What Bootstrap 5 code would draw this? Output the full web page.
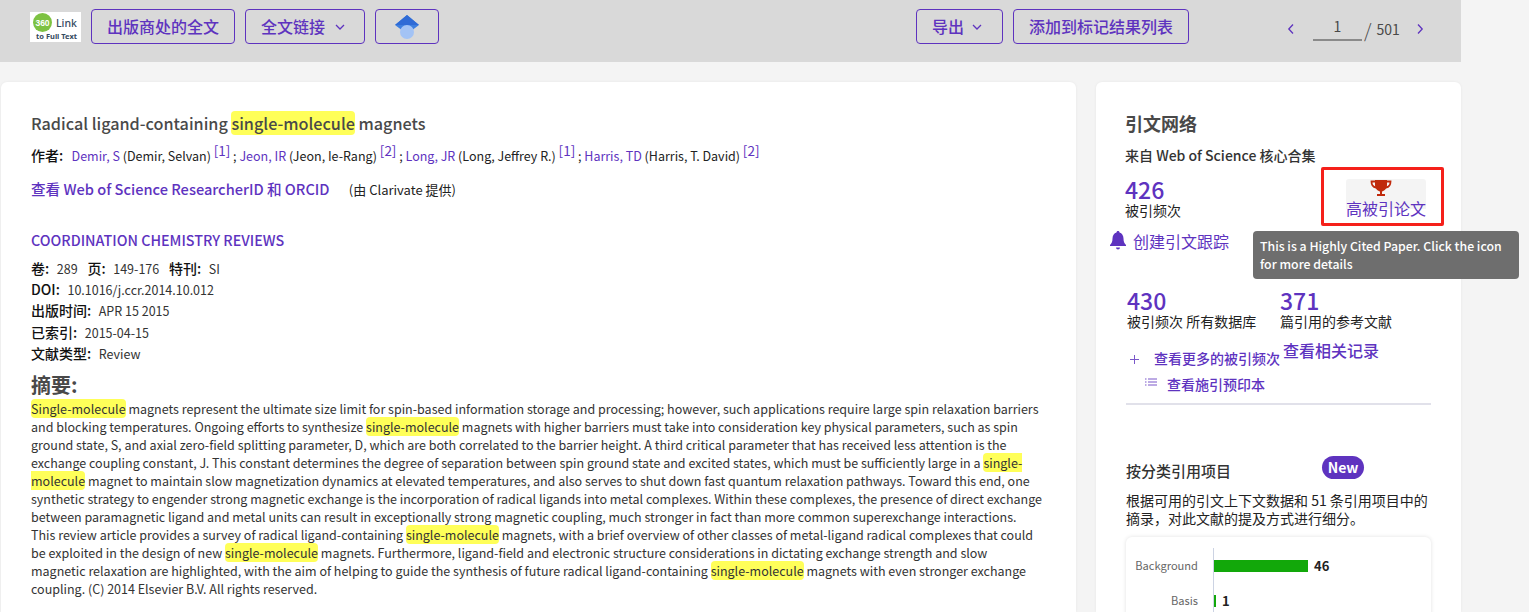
<!DOCTYPE html>
<html lang="zh">
<head>
<meta charset="utf-8">
<title>Radical ligand-containing single-molecule magnets</title>
<link href="https://cdn.jsdelivr.net/npm/bootstrap@5.3.0/dist/css/bootstrap.min.css" rel="stylesheet">
<style>
html,body{height:612px;overflow:hidden;background:#f4f4f4;}
body{font-family:"Noto Sans CJK SC","Noto Sans",sans-serif;font-size:13px;color:#212121;}
a{color:#5e33bf;text-decoration:none;}
.pg{width:1461px;position:relative;}
.tbar{height:62px;background:#d9d9d9;padding:9px 0 0 30px;}
.logo-box{width:51px;height:30px;background:#fff;margin-top:3px;margin-right:10px;flex:none;}
.tbtn{height:35px;border:1px solid #5e33bf;color:#5e33bf;border-radius:4px;font-size:16px;font-weight:500;padding:0 15px;line-height:33px;background:transparent;white-space:nowrap;display:flex;align-items:center;}
.tbtn:hover{color:#5e33bf;}
.pager{color:#494949;font-size:14px;margin-left:98px;}
.pinput{width:49px;height:24px;border-bottom:2px solid #8a8a8a;text-align:center;line-height:19px;margin:0 2px 0 18px;color:#494949;}
.pslash{font-size:19px;font-weight:300;margin-right:5px;line-height:1;}
.body-row{padding:20px 0 0 1px;gap:20px;}
.maincard{width:1075px;height:530px;background:#fff;border:0;border-radius:6px 6px 0 0;padding:29px 30px 0;box-shadow:0 0 3px rgba(0,0,0,.06);overflow:hidden;}
.sidecard{width:365px;height:530px;background:#fff;border:0;border-radius:6px 6px 0 0;padding:30px 29px 0;box-shadow:0 0 3px rgba(0,0,0,.06);overflow:hidden;}
.maincard>*,.sidecard>*{flex:none;}
.ttl{font-size:16.2px;font-weight:500;line-height:24px;color:#494949;margin:0;}
mark.hl{background:#ffff59;padding:0;border-radius:4px;color:inherit;}
.au{margin-top:8px;line-height:24px;font-size:12.5px;color:#222;}
.au sup{font-size:13.5px;top:-.35em;color:#5e33bf;}
.lbl{font-weight:500;color:#111;font-size:14px;}
.rid{font-size:14.6px;font-weight:500;margin-top:9px;line-height:24px;}
.rid small{font-size:13px;font-weight:400;color:#222;margin-left:16px;}
.jn{font-size:14.3px;font-weight:500;margin-top:26px;line-height:24px;}
.meta{font-size:12.5px;line-height:21.2px;color:#333;margin-top:6px;}
.meta .lbl{margin-right:2px;}
.meta .sp{margin-right:7px;}
.abh{font-size:20px;font-weight:700;line-height:24px;color:#494949;margin-top:9px;}
.abst{width:1012px;line-height:18px;font-size:12.5px;color:#333;margin:3px 0 0;}
.s-h{font-size:18px;font-weight:700;color:#494949;line-height:24px;margin-top:-1px;}
.s-sub{font-weight:500;line-height:20px;margin-top:10px;color:#333;font-size:14px;}
.num{font-size:23px;font-weight:500;color:#5e33bf;line-height:24px;}
.cnt{line-height:18px;color:#222;font-size:14px;}
.redbox{width:123px;height:59px;border:3px solid #f5201a;border-radius:2px;margin:-2px -12px 0 0;padding-top:4px;position:relative;}
.hcp{width:80px;margin-left:22px;text-align:center;background:linear-gradient(#f4f4f4 0 30px,transparent 30px);border-radius:3px;}
.hcp a{font-size:16px;line-height:22px;display:block;white-space:nowrap;}
.tipx{position:absolute;left:1253px;top:231px;width:266px;height:48px;background:#6e6e6e;color:#fff;border-radius:4px;font-weight:500;font-size:12.3px;line-height:18px;padding:6px 7px;z-index:3;}
.alert-l{font-size:16px;margin:3px 0 0 -15px;line-height:24px;}
.two{margin-top:35px;padding-left:2px;}
.two .col1{width:153px;}
.more{font-weight:500;font-size:14px;}
.rel{font-size:16px;font-weight:500;line-height:22px;margin:-7px 0 0 3px;}
.gline{height:2px;background:#e1e1ea;margin-top:9px;width:305px;margin-left:1px;}
.catp{margin:10px 0 0 1px;width:305px;line-height:18px;color:#222;font-size:14px;}
.newp{background:#5e33bf;color:#fff;border-radius:12px;width:42px;height:23px;font-size:14px;font-weight:700;line-height:22px;text-align:center;margin-left:91px;margin-top:-5px;}
.chartc{width:305px;margin:10px 0 0 1px;height:100px;background:#fff;border-radius:6px;box-shadow:0 0 4px rgba(0,0,0,.12);padding-top:11px;}
.crow{height:35px;}
.clab{width:72px;text-align:right;font-size:11.1px;color:#666;flex:none;padding-top:9px;}
.cbar{height:12px;background:#12a80a;}
.axis{border-left:1px solid #ccd3e3;margin-left:15px;height:35px;display:flex;align-items:center;}
.cv{font-weight:700;font-size:13px;margin-left:6px;color:#222;}
</style>
</head>
<body>
<div class="pg">
  <div class="tbar d-flex">
    <div class="logo-box">
      <svg width="51" height="30" viewBox="0 0 51 30"><circle cx="12.500" cy="10.500" r="9.500" fill="#7dc242"/><text x="12.500" y="13.500" font-size="8.500" font-weight="700" text-anchor="middle" fill="#fff" font-family="Liberation Sans">360</text><text x="26" y="15" font-size="10.500" font-weight="500" fill="#34495e" font-family="Noto Sans">Link</text><text x="6" y="27" font-size="7.500" font-weight="700" fill="#34495e" font-family="Noto Sans">to Full Text</text></svg>
    </div>
    <a class="tbtn" href="#" style="width:144px">出版商处的全文</a>
    <a class="tbtn" href="#" style="width:120px;margin-left:10px">全文链接<svg width="10" height="6" viewBox="0 0 10 6" style="margin-left:10px"><path d="M1 1l4 4 4-4" fill="none" stroke="#5e33bf" stroke-width="1.3"/></svg></a>
    <a class="tbtn justify-content-center" href="#" style="width:64px;margin-left:10px">
      <svg width="24" height="24" viewBox="0 0 24 24"><path d="M12 0l12 10-12 9L0 10z" fill="#3d7fe0"/><path d="M12 0l12 10H0z" fill="#2f6bd6"/><circle cx="12" cy="17" r="7" fill="#a3c3f5"/></svg>
    </a>
    <a class="tbtn" href="#" style="margin-left:477px;width:87px">导出<svg width="10" height="6" viewBox="0 0 10 6" style="margin-left:8px;flex:none"><path d="M1 1l4 4 4-4" fill="none" stroke="#5e33bf" stroke-width="1.3"/></svg></a>
    <a class="tbtn" href="#" style="margin-left:10px;width:176px">添加到标记结果列表</a>
    <div class="pager d-flex align-items-center" style="height:40px">
      <svg width="8" height="12" viewBox="0 0 8 12"><path d="M6 1.500L1.800 6 6 10.500" fill="none" stroke="#5e33bf" stroke-width="1.300"/></svg>
      <div class="pinput">1</div>
      <span class="pslash">/</span><span>501</span>
      <svg width="8" height="12" viewBox="0 0 8 12" style="margin-left:16px"><path d="M2 1.500L6.200 6 2 10.500" fill="none" stroke="#5e33bf" stroke-width="1.300"/></svg>
    </div>
  </div>

  <div class="body-row d-flex">
    <div class="card maincard">
      <h1 class="ttl">Radical ligand-containing <mark class="hl">single-molecule</mark> magnets</h1>
      <div class="au"><span class="lbl">作者:</span>&nbsp;&nbsp; <a href="#">Demir, S</a> (Demir, Selvan) <sup>[1]</sup> ; <a href="#">Jeon, IR</a> (Jeon, Ie-Rang) <sup>[2]</sup> ; <a href="#">Long, JR</a> (Long, Jeffrey R.) <sup>[1]</sup> ; <a href="#">Harris, TD</a> (Harris, T. David) <sup>[2]</sup></div>
      <div class="rid"><a href="#">查看 Web of Science ResearcherID 和 ORCID</a> <small>(由 Clarivate 提供)</small></div>
      <div class="jn"><a href="#">COORDINATION CHEMISTRY REVIEWS</a></div>
      <div class="meta">
        <div><span class="lbl">卷:</span>&nbsp; <span class="sp">289</span> <span class="lbl">页:</span>&nbsp; <span class="sp">149-176</span> <span class="lbl">特刊:</span>&nbsp; SI</div>
        <div><span class="lbl">DOI:</span>&nbsp; 10.1016/j.ccr.2014.10.012</div>
        <div><span class="lbl">出版时间:</span>&nbsp; APR 15 2015</div>
        <div><span class="lbl">已索引:</span>&nbsp; 2015-04-15</div>
        <div><span class="lbl">文献类型:</span>&nbsp; Review</div>
      </div>
      <div class="abh">摘要:</div>
      <p class="abst"><mark class="hl">Single-molecule</mark> magnets represent the ultimate size limit for spin-based information storage and processing; however, such applications require large spin relaxation barriers and blocking temperatures. Ongoing efforts to synthesize <mark class="hl">single-molecule</mark> magnets with higher barriers must take into consideration key physical parameters, such as spin ground state, S, and axial zero-field splitting parameter, D, which are both correlated to the barrier height. A third critical parameter that has received less attention is the exchange coupling constant, J. This constant determines the degree of separation between spin ground state and excited states, which must be sufficiently large in a <mark class="hl">single-molecule</mark> magnet to maintain slow magnetization dynamics at elevated temperatures, and also serves to shut down fast quantum relaxation pathways. Toward this end, one synthetic strategy to engender strong magnetic exchange is the incorporation of radical ligands into metal complexes. Within these complexes, the presence of direct exchange between paramagnetic ligand and metal units can result in exceptionally strong magnetic coupling, much stronger in fact than more common superexchange interactions. This review article provides a survey of radical ligand-containing <mark class="hl">single-molecule</mark> magnets, with a brief overview of other classes of metal-ligand radical complexes that could be exploited in the design of new <mark class="hl">single-molecule</mark> magnets. Furthermore, ligand-field and electronic structure considerations in dictating exchange strength and slow magnetic relaxation are highlighted, with the aim of helping to guide the synthesis of future radical ligand-containing <mark class="hl">single-molecule</mark> magnets with even stronger exchange coupling. (C) 2014 Elsevier B.V. All rights reserved.</p>
    </div>

    <div class="card sidecard">
      <div class="s-h">引文网络</div>
      <div class="s-sub">来自 Web of Science 核心合集</div>
      <div class="d-flex justify-content-between mt-1">
        <div style="padding-top:8px">
          <div class="num">426</div>
          <div class="cnt">被引频次</div>
        </div>
        <div class="redbox">
          <div class="hcp">
            <svg width="22" height="18" viewBox="0 0 22 18" class="d-block" style="margin:5px 0 0 24px"><path d="M5 1h12v5c0 4-3 6-5 6.500V15h3v2H7v-2h3v-2.500C8 12 5 10 5 6z" fill="#c02a0c"/><path d="M5 2.500H1.500c0 4 1.500 5.500 4.500 6M17 2.500h3.500c0 4-1.500 5.500-4.500 6" fill="none" stroke="#c02a0c" stroke-width="1.800"/></svg>
            <a href="#">高被引论文</a>
          </div>
        </div>
      </div>
      <div class="alert-l d-flex align-items-center"><svg width="16" height="20" viewBox="0 0 16 20" style="margin-right:7px"><path d="M8 0c1 0 1.500.7 1.500 1.500C12 2.200 13.500 4.500 13.500 7.500c0 3.500 1 5 2.500 6.500v1H0v-1c1.500-1.500 2.500-3 2.500-6.500 0-3 1.500-5.300 4-6C6.500.7 7 0 8 0zM6 16.500h4a2 2 0 0 1-4 0z" fill="#5e33bf"/></svg><a href="#">创建引文跟踪</a></div>
      <div class="two d-flex">
        <div class="col1"><div class="num">430</div><div class="cnt">被引频次 所有数据库</div></div>
        <div><div class="num">371</div><div class="cnt">篇引用的参考文献</div></div>
      </div>
      <div class="d-flex mt-3" style="padding-left:5px">
        <svg width="9" height="9" viewBox="0 0 9 9" style="margin-top:9px"><path d="M4.500 0v9M0 4.500h9" stroke="#7a57c9" stroke-width="1"/></svg>
        <a class="more" href="#" style="margin-left:15px;margin-top:2px;line-height:20px">查看更多的被引频次</a>
        <a class="rel" href="#">查看相关记录</a>
      </div>
      <div class="d-flex" style="padding-left:20px;margin-top:6px">
        <svg width="12" height="9" viewBox="0 0 12 9" style="margin-top:4px"><path d="M3 1h9M3 4h9M3 7h9" stroke="#7a57c9" stroke-width="1"/><path d="M0 1h1.500M0 4h1.500M0 7h1.500" stroke="#7a57c9"/></svg>
        <a class="more" href="#" style="margin-left:10px;line-height:20px">查看施引预印本</a>
      </div>
      <div class="gline"></div>
      <div class="d-flex" style="margin:56px 0 0 1px;line-height:20px">
        <div class="s-sub m-0" style="font-size:15px;width:105px;flex:none">按分类引用项目</div>
        <div class="newp">New</div>
      </div>
      <p class="catp">根据可用的引文上下文数据和 51 条引用项目中的摘录，对此文献的提及方式进行细分。</p>
      <div class="chartc">
        <div class="d-flex crow"><div class="clab">Background</div><div class="axis"><div class="cbar" style="width:94px"></div><span class="cv">46</span></div></div>
        <div class="d-flex crow"><div class="clab">Basis</div><div class="axis"><div class="cbar" style="width:2px"></div><span class="cv">1</span></div></div>
      </div>
    </div>
  </div>
  <div class="tipx">This is a Highly Cited Paper. Click the icon for more details</div>
</div>
<script src="https://cdn.jsdelivr.net/npm/bootstrap@5.3.0/dist/js/bootstrap.bundle.min.js"></script>
</body>
</html>
